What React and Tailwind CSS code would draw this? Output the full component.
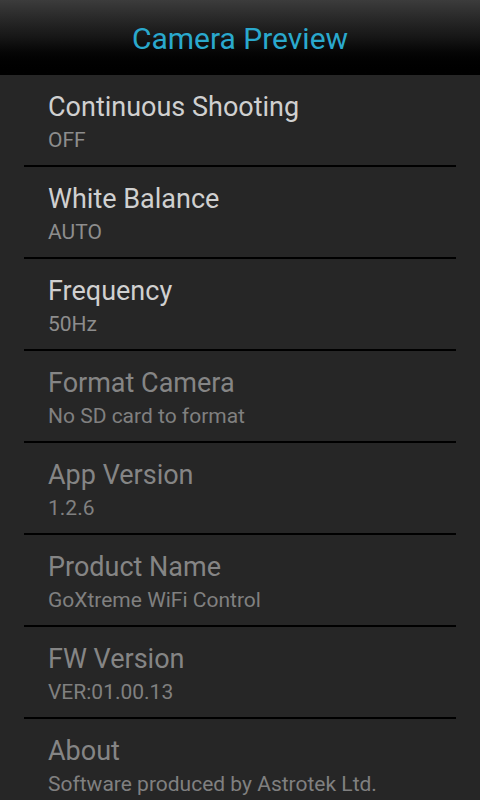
import React from 'react';

const items = [
  { title: 'Continuous Shooting', summary: 'OFF', enabled: true },
  { title: 'White Balance', summary: 'AUTO', enabled: true },
  { title: 'Frequency', summary: '50Hz', enabled: true },
  { title: 'Format Camera', summary: 'No SD card to format', enabled: false },
  { title: 'App Version', summary: '1.2.6', enabled: false },
  { title: 'Product Name', summary: 'GoXtreme WiFi Control', enabled: false },
  { title: 'FW Version', summary: 'VER:01.00.13', enabled: false },
  { title: 'About', summary: 'Software produced by Astrotek Ltd.', enabled: false },
];

const PrefRow = ({ title, summary, enabled, last }) => (
  <div className="px-6">
    <div className="h-[90px] flex flex-col justify-center px-6 pt-[4px]">
      <div className={`text-[27px] leading-[32px] ${enabled ? 'text-[#d0d0d0]' : 'text-[#858585]'}`}>{title}</div>
      <div className={`text-[21px] leading-[26px] mt-[4px] ${enabled ? 'text-[#8d8d8d]' : 'text-[#808080]'}`}>{summary}</div>
    </div>
    {!last && <div className="h-[2px] bg-black" />}
  </div>
);

export default function App() {
  return (
    <div className="w-[480px] h-[800px] overflow-hidden bg-[#262626]" style={{ fontFamily: 'Roboto, "Noto Sans", sans-serif' }}>
      <div className="h-[75px] flex items-center justify-center bg-gradient-to-b from-[#3c3c3c] via-[#161616] to-black">
        <span className="text-[30px] text-[#2aa9cd] mt-[2px]">Camera Preview</span>
      </div>
      {items.map((it, i) => (
        <PrefRow key={it.title} {...it} last={i === items.length - 1} />
      ))}
    </div>
  );
}
